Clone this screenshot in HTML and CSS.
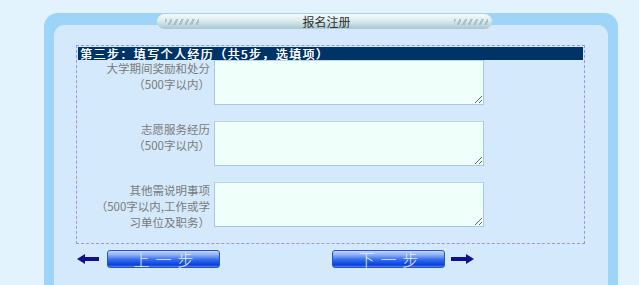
FILE: index.html
```html
<!DOCTYPE html>
<html lang="zh-CN">
<head>
<meta charset="utf-8">
<title>报名注册</title>
<link rel="stylesheet" href="styles.css">
</head>
<body>
<div class="page">
  <div class="panel">
    <div class="tab">
      <span class="deco"></span>
      <span class="tab-title">报名注册</span>
      <span class="deco"></span>
    </div>
    <div class="inner">
      <div class="box">
        <div class="step">第三步：填写个人经历（共5步，选填项）</div>
        <div class="form">
          <div class="label">大学期间奖励和处分<br>（500字以内）</div>
          <textarea class="field"></textarea>
          <div class="label">志愿服务经历<br>（500字以内）</div>
          <textarea class="field"></textarea>
          <div class="label">其他需说明事项<br>（500字以内,工作或学<br>习单位及职务）</div>
          <textarea class="field"></textarea>
        </div>
      </div>
      <div class="nav">
        <svg class="arrow" width="22" height="10" viewBox="0 0 22 10"><polygon points="0,5 8,0 8,3 22,3 22,7 8,7 8,10" fill="#10108a"/></svg>
        <button class="btn btn-prev" type="button">上一步</button>
        <button class="btn btn-next" type="button">下一步</button>
        <svg class="arrow arrow-right" width="23" height="10" viewBox="0 0 23 10"><polygon points="23,5 15,0 15,3 0,3 0,7 15,7 15,10" fill="#10108a"/></svg>
      </div>
    </div>
  </div>
</div>
</body>
</html>
```
FILE: styles.css
```css
* { box-sizing: border-box; }
html, body { margin: 0; padding: 0; }
body {
  background: #e2f3fd;
  font-family: "Noto Sans CJK SC", "Noto Sans", sans-serif;
  height: 285px;
  overflow: hidden;
}
.page {
  padding: 13px 0 0 44px;
}
.panel {
  position: relative;
  width: 574px;
  height: 272px;
  background: #9dd4f8;
  border-radius: 14px 14px 0 0;
  padding: 12px 10px 0 10px;
}
.tab {
  position: absolute;
  left: 113px;
  top: 1px;
  width: 335px;
  height: 15px;
  border-radius: 8px;
  background: linear-gradient(to bottom, #f4fbfb 0%, #dcecee 45%, #b9d4da 80%, #a9c8d0 100%);
  display: flex;
  align-items: center;
  justify-content: space-between;
  padding: 0 4px 0 8px;
}
.deco {
  width: 34px;
  height: 6px;
  background: repeating-linear-gradient(115deg, #9aafbf 0 2px, transparent 2px 5px);
  opacity: 0.7;
}
.tab-title {
  font-size: 12px;
  line-height: 14px;
  color: #333;
}
.inner {
  background: #d4eafc;
  border-radius: 10px 10px 0 0;
  height: 260px;
  padding: 20px 0 0 22px;
}
.box {
  width: 509px;
  border: 1px dashed #a293d4;
  padding: 1px 1px 0 1px;
}
.step {
  background: #003366;
  color: #fff;
  font-size: 12px;
  font-weight: normal;
  text-shadow: 0.4px 0 0 #fff;
  letter-spacing: 1.4px;
  line-height: 13px;
  height: 13px;
  padding-left: 2px;
  white-space: nowrap;
}
.form {
  display: grid;
  grid-template-columns: 136px 270px;
  grid-auto-rows: 45px;
  row-gap: 16px;
  padding-bottom: 16px;
}
.label {
  font-size: 11.5px;
  line-height: 16px;
  color: #7a7a7a;
  text-align: right;
  padding-right: 4px;
  white-space: nowrap;
  height: 45px;
}
.field {
  display: block;
  width: 270px;
  height: 45px;
  margin: 0;
  border: 1px solid #a8c7e0;
  border-top-color: #bcd4e8;
  background: #effffa;
  font: 12px "Noto Sans CJK SC", sans-serif;
}
.nav {
  display: flex;
  align-items: center;
  padding-left: 1px;
  margin-top: 6px;
}
.arrow { display: block; }
.btn {
  width: 113px;
  height: 18px;
  margin: 0 0 0 8px;
  padding: 0 0 0 6px;
  border: 1px solid #2453c8;
  border-radius: 3px;
  background: linear-gradient(to bottom, #c6d8fc 0%, #7ea4f4 30%, #3f74ee 50%, #1450e4 75%, #0a3fd6 88%, #5d8cf2 100%);
  color: #e6ecff;
  font-family: "Noto Sans CJK SC", sans-serif;
  font-size: 16px;
  line-height: 16px;
  letter-spacing: 6px;
  font-weight: 300;
  text-align: center;
  cursor: pointer;
}
.btn-next { margin-left: 112px; }
.arrow-right { margin-left: 6px; }
```
